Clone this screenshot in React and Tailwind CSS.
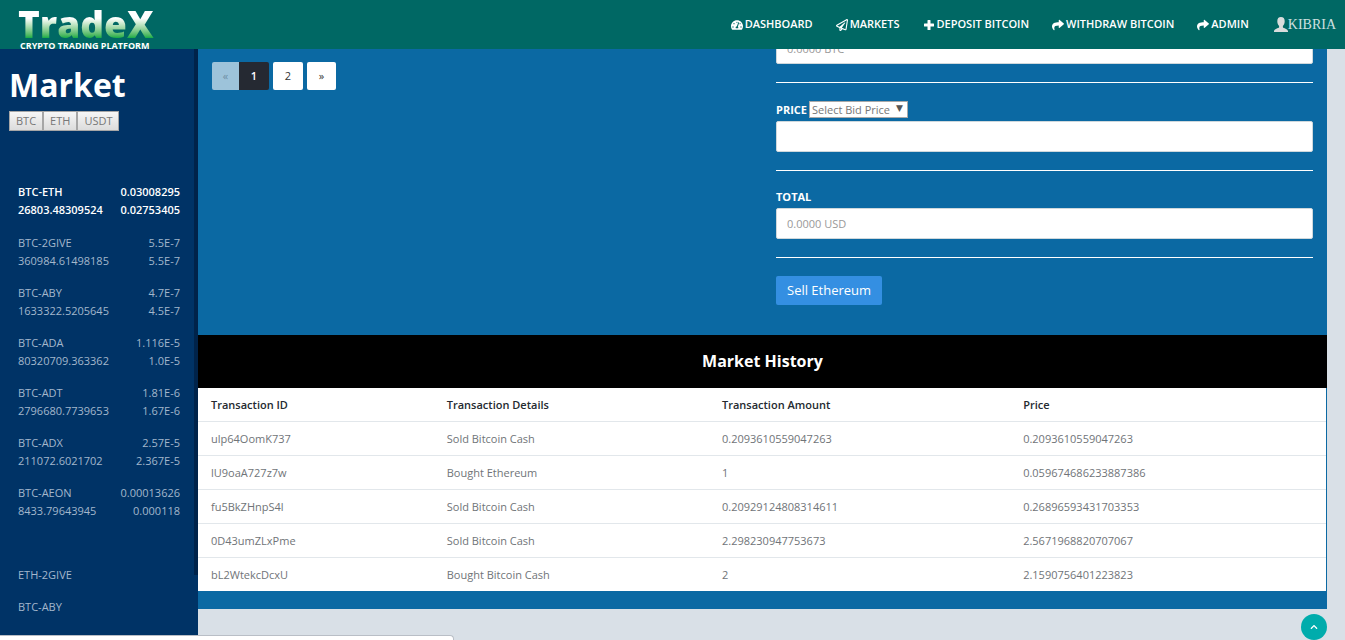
import { FaTachometerAlt, FaRegPaperPlane, FaShare, FaChevronUp } from "react-icons/fa";

function PlusIcon({ className }) {
  return (
    <svg viewBox="0 0 12 12" className={className} fill="currentColor" aria-hidden="true">
      <path d="M4.500 1.500q0-.5.500-.5h2q.5 0 .5.500v3h3q.5 0 .5.500v2q0 .5-.5.500h-3v3q0 .5-.5.500h-2q-.5 0-.5-.5v-3h-3q-.5 0-.5-.5v-2q0-.5.500-.5h3z" />
    </svg>
  );
}

const navItems = [
  { label: "DASHBOARD", Icon: FaTachometerAlt },
  { label: "MARKETS", Icon: FaRegPaperPlane },
  { label: "DEPOSIT BITCOIN", Icon: PlusIcon },
  { label: "WITHDRAW BITCOIN", Icon: FaShare },
  { label: "ADMIN", Icon: FaShare },
];

const markets = [
  ["BTC-ETH", "0.03008295", "26803.48309524", "0.02753405"],
  ["BTC-2GIVE", "5.5E-7", "360984.61498185", "5.5E-7"],
  ["BTC-ABY", "4.7E-7", "1633322.5205645", "4.5E-7"],
  ["BTC-ADA", "1.116E-5", "80320709.363362", "1.0E-5"],
  ["BTC-ADT", "1.81E-6", "2796680.7739653", "1.67E-6"],
  ["BTC-ADX", "2.57E-5", "211072.6021702", "2.367E-5"],
  ["BTC-AEON", "0.00013626", "8433.79643945", "0.000118"],
];

const history = [
  ["ulp64OomK737", "Sold Bitcoin Cash", "0.2093610559047263", "0.2093610559047263"],
  ["lU9oaA727z7w", "Bought Ethereum", "1", "0.059674686233887386"],
  ["fu5BkZHnpS4l", "Sold Bitcoin Cash", "0.20929124808314611", "0.26896593431703353"],
  ["0D43umZLxPme", "Sold Bitcoin Cash", "2.298230947753673", "2.5671968820707067"],
  ["bL2WtekcDcxU", "Bought Bitcoin Cash", "2", "2.1590756401223823"],
];

function Header() {
  return (
    <header className="flex h-[49px] shrink-0 items-center justify-between bg-[#006864] pr-[9px] pl-[18px]">
      <a href="#" className="flex flex-col self-start pt-[6px] whitespace-nowrap text-white">
        <span className="bg-linear-to-b from-white from-35% to-[#1fae4b] to-90% bg-clip-text text-[37px] leading-[35px] font-extrabold text-transparent">
          TradeX
        </span>
        <span className="pl-[2px] text-[9px] leading-[9px] font-bold">CRYPTO TRADING PLATFORM</span>
      </a>
      <nav className="flex items-center gap-[23px] text-[11px] font-semibold whitespace-nowrap text-white">
        {navItems.map(({ label, Icon }) => (
          <a key={label} href="#" className="flex items-center gap-[2px]">
            <Icon className="size-3" />
            {label}
          </a>
        ))}
        <a
          href="#"
          className="flex items-center pl-[2px] font-['Liberation_Serif',serif] text-[14px] font-normal text-[#cfe0e0]"
        >
          <svg viewBox="0 0 14 14" preserveAspectRatio="none" className="h-[15px] w-[14px] fill-[#d9dcdc]" aria-hidden="true">
            <path d="M7 0C4.600 0 3.200 1.500 3.300 3.900c0 1.800.7 3.400 1.800 4.400v1.200C4.600 10.600 0 10.900 0 13.200V14h14v-.8c0-2.300-4.600-2.600-5.100-3.700V8.300c1.100-1 1.800-2.600 1.800-4.400C10.800 1.500 9.400 0 7 0z" />
          </svg>
          KIBRIA
        </a>
      </nav>
    </header>
  );
}

function Sidebar() {
  return (
    <aside className="flex w-[198px] shrink-0 bg-[#003366]">
      <div className="min-w-0 flex-1">
        <h1 className="px-[9px] pt-[14px] text-[32px] leading-[44px] font-bold text-white">Market</h1>
        <div className="flex px-[9px] pt-1">
          {["BTC", "ETH", "USDT"].map((coin) => (
            <button
              key={coin}
              className="h-5 border border-[#a6a6a6] bg-linear-to-b from-[#f6f6f6] to-[#dcdcdc] px-[6px] text-[11px] leading-4 text-[#777]"
            >
              {coin}
            </button>
          ))}
        </div>
        <ul className="flex flex-col gap-[14px] pt-[52px] pr-[14px] pl-[18px] leading-[18px] text-[#a3b7cc]">
          {markets.map(([pair, high, volume, low]) => (
            <li
              key={pair}
              className="grid grid-cols-[auto_auto] justify-between first:mb-px first:font-semibold first:text-white"
            >
              <span>{pair}</span>
              <span className="text-right">{high}</span>
              <span>{volume}</span>
              <span className="text-right">{low}</span>
            </li>
          ))}
        </ul>
        <ul className="flex flex-col gap-[14px] pt-[46px] pl-[18px] leading-[18px] text-[#a3b7cc]">
          <li>ETH-2GIVE</li>
          <li>BTC-ABY</li>
        </ul>
      </div>
      <div className="h-[89%] w-1 bg-[#00234a]" />
    </aside>
  );
}

const inputClass =
  "block h-[31px] w-full rounded-[2px] border border-[#cfd8dc] bg-white px-[10px] text-[11px] text-[#555] placeholder:text-[#999]";

function Pagination() {
  return (
    <div className="flex h-7 text-[11px] text-[#333]">
      <button className="w-[27px] rounded-l-[2px] bg-[#9dc3da] text-[#6d8ea3]">«</button>
      <button className="w-[30px] rounded-r-[2px] bg-[#252932] font-semibold text-white">1</button>
      <button className="ml-1 w-[30px] rounded-[2px] bg-white">2</button>
      <button className="ml-1 w-[29px] rounded-[2px] bg-white">»</button>
    </div>
  );
}

function SellForm() {
  return (
    <form className="-mt-4 pb-[30px]">
      <input aria-label="Amount" placeholder="0.0000 BTC" className={inputClass} />
      <hr className="my-[18px] border-white" />
      <div className="flex h-5 items-start gap-[2px]">
        <label htmlFor="price" className="leading-[18px] font-bold text-white">
          PRICE
        </label>
        <div className="relative">
          <select
            aria-label="Bid price"
            className="block h-[17px] w-[99px] appearance-none border border-[#a9a9a9] bg-white px-[2px] text-[11px] leading-[15px] text-[#777]"
          >
            <option>Select Bid Price</option>
          </select>
          <span className="pointer-events-none absolute top-0 right-[5px] font-['DejaVu_Sans',sans-serif] text-[9px] leading-[14px] text-[#555]">
            ▼
          </span>
        </div>
      </div>
      <input id="price" className={inputClass} />
      <hr className="my-[18px] border-white" />
      <label htmlFor="total" className="block h-[19px] leading-4 font-bold text-white">
        TOTAL
      </label>
      <input id="total" placeholder="0.0000 USD" className={inputClass} />
      <hr className="my-[18px] border-white" />
      <button type="button" className="block h-[29px] rounded-[2px] bg-[#348fe2] px-[11px] text-[13px] text-white">
        Sell Ethereum
      </button>
    </form>
  );
}

function History() {
  return (
    <section className="bg-[#0b69a3] pb-[18px]">
      <h2 className="bg-black text-center text-[16px] leading-[53px] font-bold text-white">Market History</h2>
      <div className="pr-px">
        <table className="w-full table-fixed border-collapse bg-white text-left text-[#707478]">
          <colgroup>
            <col className="w-[20.9%]" />
            <col className="w-[24.4%]" />
            <col className="w-[26.7%]" />
            <col className="w-[28%]" />
          </colgroup>
          <thead className="text-[#242a30]">
            <tr className="h-[33px]">
              {["Transaction ID", "Transaction Details", "Transaction Amount", "Price"].map((title) => (
                <th key={title} className="px-[13px] pt-[2px] font-semibold">
                  {title}
                </th>
              ))}
            </tr>
          </thead>
          <tbody>
            {history.map((row) => (
              <tr key={row[0]} className="h-[34px] border-t border-[#e2e7eb]">
                {row.map((cell, i) => (
                  <td key={i} className="px-[13px] pt-[2px]">
                    {cell}
                  </td>
                ))}
              </tr>
            ))}
          </tbody>
        </table>
      </div>
    </section>
  );
}

export default function App() {
  return (
    <div className="flex h-screen flex-col overflow-hidden bg-[#d9e0e7] font-['Open_Sans',sans-serif] text-[11px]">
      <Header />
      <div className="flex min-h-0 flex-1">
        <Sidebar />
        <main className="min-w-0 flex-1 overflow-hidden pr-[18px]">
          <div className="grid grid-cols-2 gap-[27px] bg-[#0b69a3] pr-[14px] pl-[14px]">
            <div className="pt-[13px]">
              <Pagination />
            </div>
            <SellForm />
          </div>
          <History />
        </main>
      </div>
      <div className="fixed bottom-0 left-0 h-[5px] w-[454px] rounded-tr-[4px] border-t border-r border-[#b9bec6] bg-white" />
      <button
        aria-label="Back to top"
        className="fixed right-[18px] bottom-0 flex size-[26px] items-center justify-center rounded-full bg-[#00acac] text-white"
      >
        <FaChevronUp className="size-2" />
      </button>
    </div>
  );
}
